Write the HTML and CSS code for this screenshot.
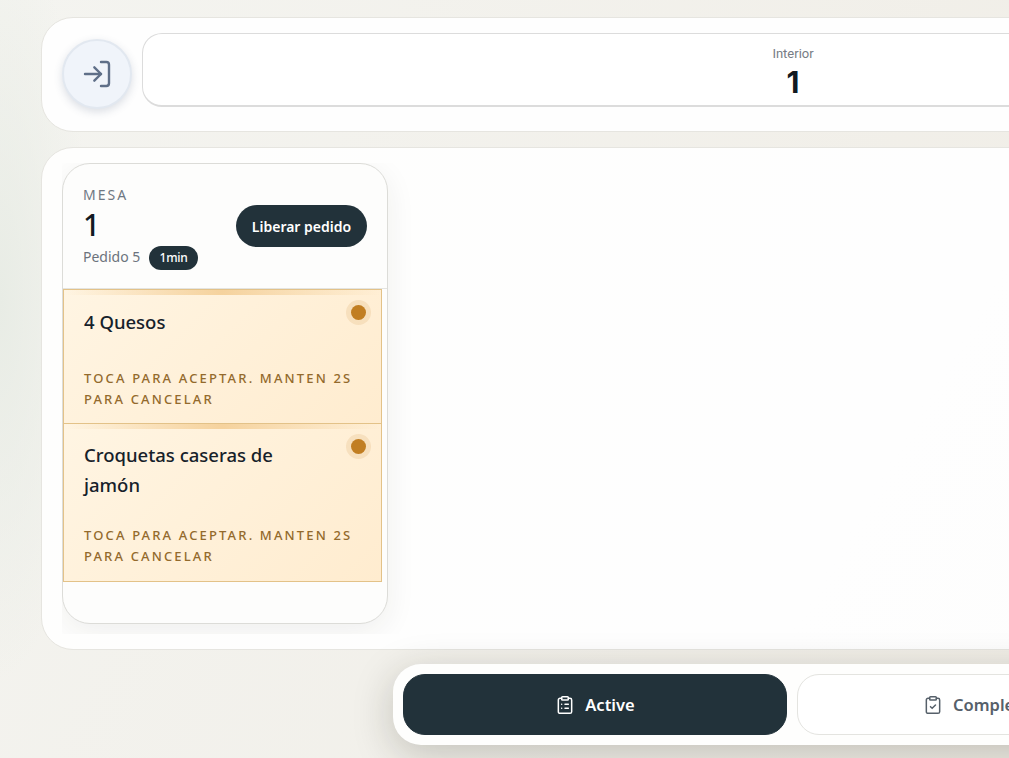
FILE: index.html
```html
<!DOCTYPE html>
<html lang="es">
<head>
    <meta charset="UTF-8">
    <meta name="viewport" content="width=device-width, initial-scale=1.0">
    <title>Cocina</title>
    <link rel="stylesheet" href="styles.css">
</head>
<body>
    <div class="page">
        <header class="top-panel">
            <button class="enter-btn" aria-label="Entrar">
                <svg class="enter-icon" viewBox="0 0 24 24" fill="none" stroke="currentColor" stroke-width="1.8" stroke-linecap="round" stroke-linejoin="round">
                    <path d="M15 3h4a2 2 0 0 1 2 2v14a2 2 0 0 1-2 2h-4"/>
                    <path d="m10 17 5-5-5-5"/>
                    <path d="M15 12H3"/>
                </svg>
            </button>
            <div class="zone-tile">
                <span class="zone-name">Interior</span>
                <span class="zone-count">1</span>
            </div>
        </header>

        <main class="orders-panel">
            <div class="orders-scroll">
                <section class="order-card">
                    <div class="order-head">
                        <div>
                            <p class="order-label">MESA</p>
                            <p class="order-table">1</p>
                            <p class="order-meta">Pedido 5 <span class="time-badge">1min</span></p>
                        </div>
                        <button class="release-btn">Liberar pedido</button>
                    </div>
                    <div class="order-items">
                        <div class="order-item">
                            <span class="status-dot"></span>
                            <h3 class="item-name">4 Quesos</h3>
                            <p class="item-hint">Toca para aceptar. Manten 2s para cancelar</p>
                        </div>
                        <div class="order-item">
                            <span class="status-dot"></span>
                            <h3 class="item-name">Croquetas caseras de jamón</h3>
                            <p class="item-hint">Toca para aceptar. Manten 2s para cancelar</p>
                        </div>
                    </div>
                </section>
            </div>
        </main>

        <nav class="tab-bar">
            <button class="tab tab-active">
                <svg class="tab-icon" viewBox="0 0 24 24" fill="none" stroke="currentColor" stroke-width="1.8" stroke-linecap="round" stroke-linejoin="round">
                    <rect x="8" y="2" width="8" height="4" rx="1"/>
                    <path d="M16 4h2a2 2 0 0 1 2 2v14a2 2 0 0 1-2 2H6a2 2 0 0 1-2-2V6a2 2 0 0 1 2-2h2"/>
                    <path d="M12 11h4M12 16h4M8 11h.01M8 16h.01"/>
                </svg>
                Active
            </button>
            <button class="tab tab-done">
                <svg class="tab-icon" viewBox="0 0 24 24" fill="none" stroke="currentColor" stroke-width="1.8" stroke-linecap="round" stroke-linejoin="round">
                    <rect x="8" y="2" width="8" height="4" rx="1"/>
                    <path d="M16 4h2a2 2 0 0 1 2 2v14a2 2 0 0 1-2 2H6a2 2 0 0 1-2-2V6a2 2 0 0 1 2-2h2"/>
                    <path d="m9 14 2 2 4-4"/>
                </svg>
                Completed
            </button>
        </nav>
    </div>
</body>
</html>
```
FILE: styles.css
```css
/* Pantalla de cocina */
* {
    margin: 0;
    padding: 0;
    box-sizing: border-box;
}
html, body {
    height: 100%;
    overflow: hidden;
}
body {
    font-family: 'Noto Sans', 'Open Sans', sans-serif;
    color: #16212a;
    background:
        radial-gradient(ellipse 90px 380px at 0 300px, #e8ece5, transparent),
        linear-gradient(115deg, #f4f4f0, #f0ede6);
}
button {
    font-family: inherit;
    border: none;
    cursor: pointer;
}
.page {
    width: 1465px;
    height: 758px;
    padding: 17px 0 0 41px;
    display: flex;
    flex-direction: column;
}

/* Panel superior */
.top-panel {
    display: flex;
    align-items: flex-start;
    gap: 10px;
    height: 115px;
    padding: 14.5px 20px 0;
    background: #fefefe;
    border: 1px solid #e6e5e0;
    border-radius: 32px;
}
.enter-btn {
    width: 70px;
    height: 70px;
    margin-top: 6.5px;
    flex-shrink: 0;
    display: flex;
    align-items: center;
    justify-content: center;
    color: #5f6f88;
    background: #f0f4fa;
    border: 2px solid #e2e8f0;
    border-radius: 50%;
    box-shadow: 0 3px 8px rgba(60, 80, 110, 0.18);
}
.enter-icon {
    width: 32px;
    height: 32px;
}
.zone-tile {
    flex: 1;
    height: 74px;
    display: flex;
    flex-direction: column;
    align-items: center;
    padding-top: 12.5px;
    background: #fff;
    border: 1px solid #dcdcdc;
    border-bottom-width: 2px;
    border-radius: 20px;
}
.zone-name {
    font-family: 'Roboto', sans-serif;
    font-size: 13px;
    line-height: 16px;
    color: #777d85;
}
.zone-count {
    margin-top: 1px;
    font-family: 'Inter', 'Roboto', sans-serif;
    font-size: 30px;
    font-weight: 700;
    line-height: 38px;
    color: #121a22;
}

/* Panel de pedidos */
.orders-panel {
    height: 503px;
    margin-top: 15px;
    padding: 15px 20px 0;
    background: linear-gradient(120deg, #fefefd, #fefefe 60%, #fcfcfb);
    border: 1px solid #e6e5e0;
    border-radius: 32px;
}
.orders-scroll {
    height: 471px;
    overflow: hidden;
    padding-right: 40px;
}
.order-card {
    width: 326px;
    height: 461px;
    background: #fdfdfc;
    border: 1px solid #dcdcd8;
    border-radius: 28px;
    box-shadow: 0 8px 30px rgba(40, 40, 30, 0.07);
    overflow: hidden;
}
.order-head {
    display: flex;
    align-items: flex-start;
    justify-content: space-between;
    height: 125px;
    padding: 20px 20px 0;
    border-bottom: 1px solid #e4e4e0;
}
.order-label {
    font-size: 14px;
    line-height: 22px;
    letter-spacing: 2px;
    color: #6f7883;
}
.order-table {
    font-size: 30px;
    font-weight: 500;
    line-height: 38px;
    color: #121a22;
}
.order-meta {
    margin-top: 1px;
    font-size: 14px;
    line-height: 24px;
    color: #6c737c;
}
.time-badge {
    display: inline-block;
    margin-left: 5px;
    padding: 0 10.5px;
    font-size: 12px;
    font-weight: 500;
    letter-spacing: -0.2px;
    color: #fff;
    background: #22323a;
    border-radius: 12px;
}
.release-btn {
    height: 42px;
    width: 131px;
    margin-top: 21px;
    font-size: 14px;
    font-weight: 600;
    color: #fff;
    background: #22323a;
    border-radius: 21px;
}

/* Platos */
.order-items {
    width: 319px;
    border-bottom: 1px solid #e3c288;
}
.order-item {
    position: relative;
    padding: 16px 20px 14px;
    background: linear-gradient(135deg, #fff5e3, #ffeccf);
    border: 1px solid #e3c288;
    border-bottom: none;
}
.order-item:first-child {
    padding: 17px 20px 13px;
}
.order-item::before {
    content: "";
    position: absolute;
    top: 0;
    left: 0;
    right: 0;
    height: 5px;
    background: linear-gradient(to right, rgba(245, 205, 145, 0), #f5d29d 50%, rgba(245, 205, 145, 0));
}
.status-dot {
    position: absolute;
    top: 15px;
    right: 15px;
    width: 15px;
    height: 15px;
    background: #c17e22;
    border-radius: 50%;
    box-shadow: 0 0 0 5px rgba(193, 126, 34, 0.13);
}
.item-name {
    min-height: 36px;
    max-width: 240px;
    font-size: 18.5px;
    font-weight: 500;
    line-height: 30px;
    color: #16212a;
}
.item-hint {
    margin-top: 25px;
    font-size: 13px;
    font-weight: 500;
    line-height: 21px;
    letter-spacing: 2.15px;
    text-transform: uppercase;
    color: #936a2c;
}

/* Barra inferior */
.tab-bar {
    display: flex;
    gap: 10px;
    width: 784px;
    height: 81px;
    margin: 14px 0 0 352px;
    padding: 10px;
    background: #fefefd;
    border-radius: 28px;
    box-shadow: 0 10px 40px rgba(30, 30, 20, 0.22);
}
.tab {
    width: 384px;
    display: flex;
    align-items: center;
    justify-content: center;
    gap: 10px;
    font-size: 16.5px;
    font-weight: 600;
    color: #56606a;
    background: #fff;
    border: 1px solid #e4e4e0;
    border-radius: 22px;
}
.tab-done {
    width: 370px;
}
.tab-active {
    color: #fff;
    background: #22323a;
    border-color: #22323a;
}
.tab-icon {
    width: 20px;
    height: 20px;
}
```
